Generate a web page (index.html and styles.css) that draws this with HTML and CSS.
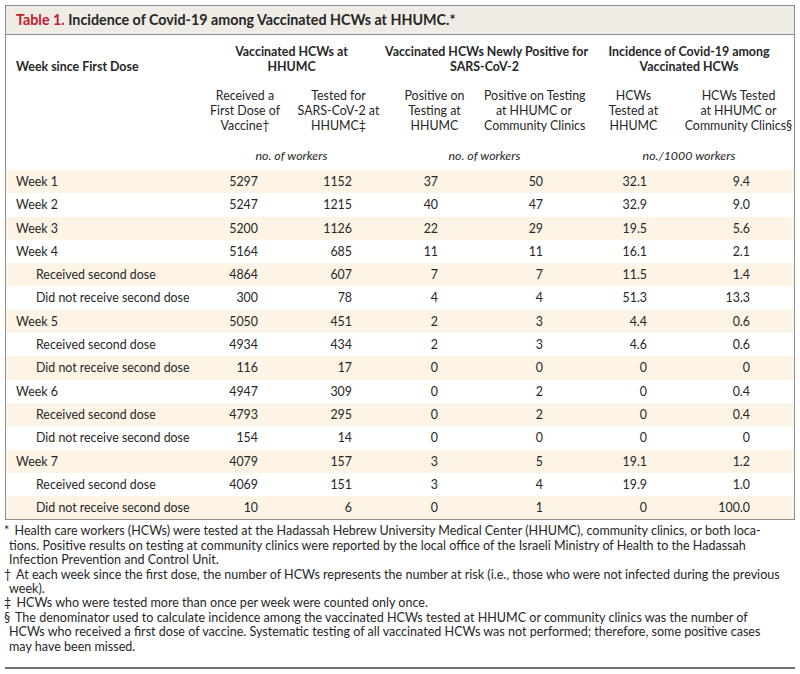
FILE: index.html
```html
<!DOCTYPE html>
<html lang="en">
<head>
<meta charset="utf-8">
<title>Table 1</title>
<link rel="stylesheet" href="styles.css">
</head>
<body>
<div class="page">
  <div class="tbox">
    <div class="title"><span class="tnum">Table 1.</span> Incidence of Covid-19 among Vaccinated HCWs at HHUMC.*</div>
    <table class="data">
      <colgroup>
        <col class="c-lbl"><col class="c1"><col class="c2"><col class="c3"><col class="c4"><col class="c5"><col class="c6">
      </colgroup>
      <thead>
        <tr class="grp">
          <th class="lbl">Week since First Dose</th>
          <th colspan="2">Vaccinated HCWs at<br>HHUMC</th>
          <th colspan="2">Vaccinated HCWs Newly Positive for<br>SARS-CoV-2</th>
          <th colspan="2">Incidence of Covid-19 among<br>Vaccinated HCWs</th>
        </tr>
        <tr class="sub">
          <th></th>
          <th>Received a<br>First Dose of<br>Vaccine†</th>
          <th>Tested for<br>SARS-CoV-2 at<br>HHUMC‡</th>
          <th>Positive on<br>Testing at<br>HHUMC</th>
          <th>Positive on Testing<br>at HHUMC or<br>Community Clinics</th>
          <th>HCWs<br>Tested at<br>HHUMC</th>
          <th>HCWs Tested<br>at HHUMC or<br>Community Clinics§</th>
        </tr>
        <tr class="units">
          <th></th>
          <th colspan="2">no. of workers</th>
          <th colspan="2">no. of workers</th>
          <th colspan="2">no./1000 workers</th>
        </tr>
      </thead>
      <tbody>
        <tr><td>Week 1</td><td>5297</td><td>1152</td><td>37</td><td>50</td><td>32.1</td><td>9.4</td></tr>
        <tr><td>Week 2</td><td>5247</td><td>1215</td><td>40</td><td>47</td><td>32.9</td><td>9.0</td></tr>
        <tr><td>Week 3</td><td>5200</td><td>1126</td><td>22</td><td>29</td><td>19.5</td><td>5.6</td></tr>
        <tr><td>Week 4</td><td>5164</td><td>685</td><td>11</td><td>11</td><td>16.1</td><td>2.1</td></tr>
        <tr class="ind"><td>Received second dose</td><td>4864</td><td>607</td><td>7</td><td>7</td><td>11.5</td><td>1.4</td></tr>
        <tr class="ind"><td>Did not receive second dose</td><td>300</td><td>78</td><td>4</td><td>4</td><td>51.3</td><td>13.3</td></tr>
        <tr><td>Week 5</td><td>5050</td><td>451</td><td>2</td><td>3</td><td>4.4</td><td>0.6</td></tr>
        <tr class="ind"><td>Received second dose</td><td>4934</td><td>434</td><td>2</td><td>3</td><td>4.6</td><td>0.6</td></tr>
        <tr class="ind"><td>Did not receive second dose</td><td>116</td><td>17</td><td>0</td><td>0</td><td>0</td><td>0</td></tr>
        <tr><td>Week 6</td><td>4947</td><td>309</td><td>0</td><td>2</td><td>0</td><td>0.4</td></tr>
        <tr class="ind"><td>Received second dose</td><td>4793</td><td>295</td><td>0</td><td>2</td><td>0</td><td>0.4</td></tr>
        <tr class="ind"><td>Did not receive second dose</td><td>154</td><td>14</td><td>0</td><td>0</td><td>0</td><td>0</td></tr>
        <tr><td>Week 7</td><td>4079</td><td>157</td><td>3</td><td>5</td><td>19.1</td><td>1.2</td></tr>
        <tr class="ind"><td>Received second dose</td><td>4069</td><td>151</td><td>3</td><td>4</td><td>19.9</td><td>1.0</td></tr>
        <tr class="ind"><td>Did not receive second dose</td><td>10</td><td>6</td><td>0</td><td>1</td><td>0</td><td>100.0</td></tr>
      </tbody>
    </table>
  </div>
  <div class="notes">
    <p><span class="sym">*</span> Health care workers (HCWs) were tested at the Hadassah Hebrew University Medical Center (HHUMC), community clinics, or both loca-<br>tions. Positive results on testing at community clinics were reported by the local office of the Israeli Ministry of Health to the Hadassah<br>Infection Prevention and Control Unit.</p>
    <p><span class="sym">†</span> At each week since the first dose, the number of HCWs represents the number at risk (i.e., those who were not infected during the previous<br>week).</p>
    <p><span class="sym">‡</span> HCWs who were tested more than once per week were counted only once.</p>
    <p><span class="sym">§</span> The denominator used to calculate incidence among the vaccinated HCWs tested at HHUMC or community clinics was the number of<br>HCWs who received a first dose of vaccine. Systematic testing of all vaccinated HCWs was not performed; therefore, some positive cases<br>may have been missed.</p>
  </div>
  <div class="rule"></div>
</div>
</body>
</html>
```

FILE: styles.css
```css
html, body {
  margin: 0;
  padding: 0;
  background: #ffffff;
}

body {
  font-family: "Lato", "Open Sans", sans-serif;
  font-size: 12.4px;
  color: #262626;
}

.page {
  padding: 5px 5px 0 5px;
  width: 790px;
}

.tbox {
  border: 1px solid #8e8e8e;
}

.title {
  background: #efebe5;
  border-bottom: 1px solid #8e8e8e;
  padding: 5px 10px;
  font-size: 14.3px;
  line-height: 18px;
  font-weight: 700;
  color: #262626;
}

.tnum {
  color: #c3202f;
}

.data {
  width: 100%;
  border-collapse: collapse;
  table-layout: fixed;
}

.c-lbl { width: 192px; }
.c1 { width: 94px; }
.c2 { width: 93px; }
.c3 { width: 99px; }
.c4 { width: 100px; }
.c5 { width: 99px; }
.c6 { width: 111px; }

.data th {
  font-weight: 400;
  text-align: center;
  line-height: 15px;
  white-space: nowrap;
  padding: 0;
}

.grp th {
  font-weight: 700;
  padding: 9px 0 7px;
  vertical-align: bottom;
}

.grp th.lbl {
  text-align: left;
  padding-left: 10px;
}

.sub th {
  padding: 7px 0 7px;
  vertical-align: bottom;
}

.units th {
  font-style: italic;
  padding: 8px 0 7px;
}

.data td {
  line-height: 15px;
  padding: 4px 0 4.3px;
  text-align: right;
  white-space: nowrap;
}

.data td:first-child {
  text-align: left;
  padding-left: 10px;
}

.ind td:first-child {
  padding-left: 30px;
}

.data td:nth-child(2) { padding-right: 34px; }
.data td:nth-child(3) { padding-right: 33px; }
.data td:nth-child(4) { padding-right: 46px; }
.data td:nth-child(5) { padding-right: 41px; }
.data td:nth-child(6) { padding-right: 36px; }
.data td:nth-child(7) { padding-right: 44px; }

.data tbody tr:nth-child(odd) {
  background: #fdf4e6;
}

.notes {
  padding: 4px 0 0 4px;
  font-size: 12.55px;
  line-height: 14.4px;
}

.notes p {
  margin: 0;
  white-space: nowrap;
  text-indent: -5px;
}

.sym {
  margin-right: 2px;
}

.rule {
  margin-top: 13px;
  border-top: 2px solid #707070;
}
```
